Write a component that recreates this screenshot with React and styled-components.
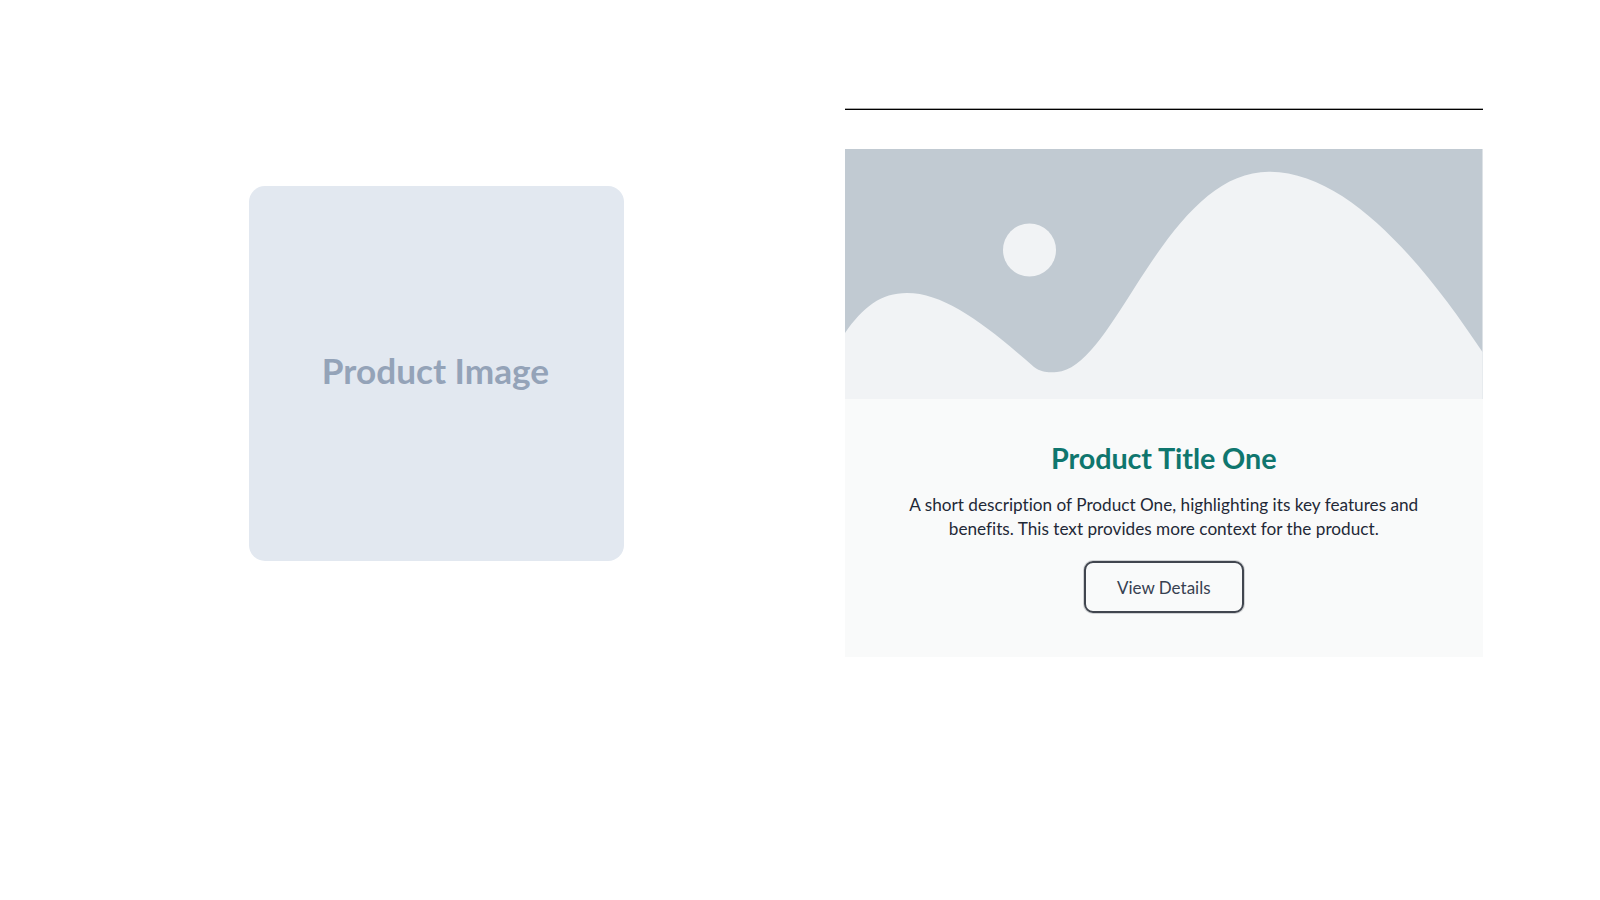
import React from "react";
import styled, { createGlobalStyle } from "styled-components";

const Global = createGlobalStyle`
  html, body { margin: 0; padding: 0; background: #ffffff; }
`;

const Page = styled.main`
  width: 1600px;
  height: 900px;
  box-sizing: border-box;
  display: flex;
  align-items: flex-start;
  padding: 109px 117.5px 0 32px;
  gap: 4px;
`;

const MediaColumn = styled.section`
  flex: 1;
  display: flex;
  justify-content: center;
  padding-top: 77px;
`;

const Placeholder = styled.div`
  width: 375px;
  height: 375px;
  box-sizing: border-box;
  padding: 0 2px 6px 0;
  border-radius: 16px;
  background: #e2e8f0;
  color: #94a3b8;
  display: flex;
  align-items: center;
  justify-content: center;
  font: 700 35.2px/1 Lato, sans-serif;
`;

const CardColumn = styled.section`
  width: 637.5px;
  display: flex;
  flex-direction: column;
`;

const Rule = styled.hr`
  width: 100%;
  height: 1px;
  margin: 0 0 39px;
  border: 0;
  background: #000000;
  box-shadow: 0 -1px 0 #a8a8a8;
`;

const Card = styled.article`
  display: flex;
  flex-direction: column;
  background: #f9fafa;
`;

const Illustration = styled.svg`
  display: block;
  width: 100%;
  height: 250px;
`;

const Body = styled.div`
  height: 258px;
  box-sizing: border-box;
  padding-top: 41px;
  display: flex;
  flex-direction: column;
  align-items: center;
  text-align: center;
`;

const Title = styled.h2`
  margin: 0 0 17px;
  font: 700 28.8px/36px Lato, sans-serif;
  font-variant-ligatures: none;
  letter-spacing: -0.1px;
  color: #0f766e;
`;

const Description = styled.p`
  width: 540px;
  margin: 0 0 20px;
  font: 400 17.2px/24px Lato, sans-serif;
  font-variant-ligatures: none;
  color: #1f2937;
`;

const Button = styled.button`
  width: 160px;
  height: 52px;
  box-sizing: border-box;
  border: 2px solid #41464f;
  border-radius: 9px;
  box-shadow: 0 0 0 1px rgba(65, 70, 79, 0.22);
  background: transparent;
  color: #374151;
  font: 400 17px/24px Lato, sans-serif;
  font-variant-ligatures: none;
  padding: 2px 0 0;
`;

export default function App() {
  return (
    <>
      <Global />
      <Page>
        <MediaColumn>
          <Placeholder>Product Image</Placeholder>
        </MediaColumn>
        <CardColumn>
          <Rule />
          <Card>
            <Illustration viewBox="0 0 637.5 250" aria-hidden="true">
              <rect width="637.5" height="250" fill="#c1cad2" />
              <circle cx="184.5" cy="101" r="26.5" fill="#f1f3f5" />
              <path
                d="M0 184 C18 158 36 144 62 144 C100 144 140 175 189 218 C197 224 205 223.5 212 223 C238 221 262 182 290 138 C330 75 370 22.7 424 22.7 C505 22.7 582 120 637.5 203 L637.5 250 L0 250 Z"
                fill="#f1f3f5"
              />
            </Illustration>
            <Body>
              <Title>Product Title One</Title>
              <Description>
                A short description of Product One, highlighting its key features and benefits. This text provides more context for the product.
              </Description>
              <Button type="button">View Details</Button>
            </Body>
          </Card>
        </CardColumn>
      </Page>
    </>
  );
}
